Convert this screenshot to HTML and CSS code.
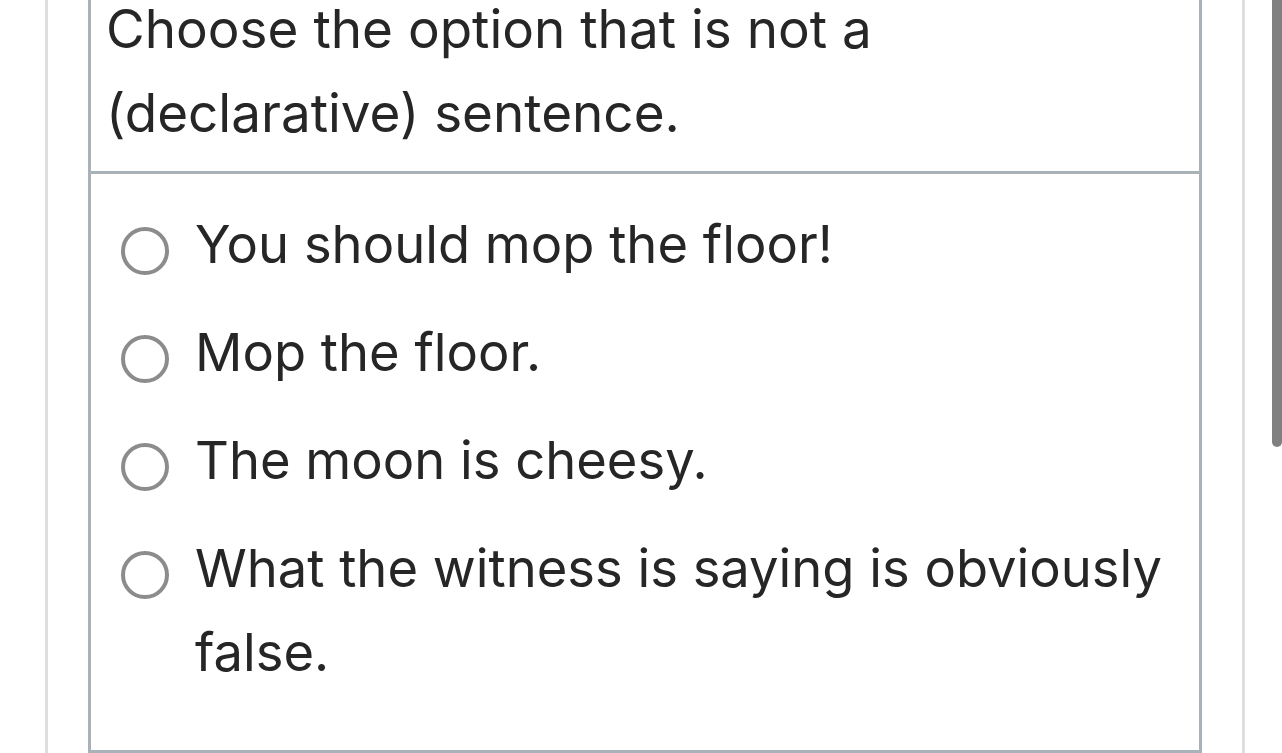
FILE: index.html
```html
<!DOCTYPE html>
<html lang="en">
  <head>
    <meta charset="UTF-8" />
    <meta name="viewport" content="width=device-width, initial-scale=1.0" />
    <title>Question</title>
    <link rel="stylesheet" href="styles.css">
  </head>
  <body>
    <div class="b-page">
      <div class="b-card">
        <div class="b-card__header">
          <p class="b-card__question">Choose the option that is not a (declarative) sentence.</p>
        </div>
        <div class="b-card__options">
          <label class="b-option">
            <span class="b-option__radio"></span>
            <span class="b-option__text">You should mop the floor!</span>
          </label>
          <label class="b-option">
            <span class="b-option__radio"></span>
            <span class="b-option__text">Mop the floor.</span>
          </label>
          <label class="b-option">
            <span class="b-option__radio"></span>
            <span class="b-option__text">The moon is cheesy.</span>
          </label>
          <label class="b-option">
            <span class="b-option__radio"></span>
            <span class="b-option__text">What the witness is saying is obviously false.</span>
          </label>
        </div>
      </div>
    </div>
    <div class="b-scrollbar"></div>
  </body>
</html>
```

FILE: styles.css
```css
html, body
{
  margin: 0;
  padding: 0;
  background: #ffffff;
  overflow: hidden;
}

body
{
  font-family: Inter, "Liberation Sans", sans-serif;
  color: #262626;
}

.b-page
{
  margin-left: 45px;
  width: 1114px;
  padding: 0 40px;
  border-left: 3px solid #dedede;
  border-right: 3px solid #dedede;
  min-height: 753px;
}

.b-card
{
  margin-top: -32px;
  border: 3px solid #a9b1b9;
}

.b-card__header
{
  padding: 16px 14px 16px 15px;
  border-bottom: 3px solid #a9b1b9;
}

.b-card__question
{
  margin: 0;
  width: 800px;
  font-size: 53px;
  line-height: 84px;
}

.b-card__options
{
  padding: 16px 0 44px 30px;
}

.b-option
{
  display: flex;
  align-items: flex-start;
  padding: 12px 0;
}

.b-option__radio
{
  flex: none;
  width: 40px;
  height: 40px;
  margin-top: 25px;
  margin-right: 26px;
  border: 4px solid #8c8c8c;
  border-radius: 50%;
}

.b-option__text
{
  font-size: 52.5px;
  line-height: 84px;
  width: 980px;
}

.b-scrollbar
{
  position: fixed;
  top: 0;
  right: 0;
  width: 10px;
  height: 447px;
  background: #808080;
  border-radius: 0 0 5px 5px;
}
```
